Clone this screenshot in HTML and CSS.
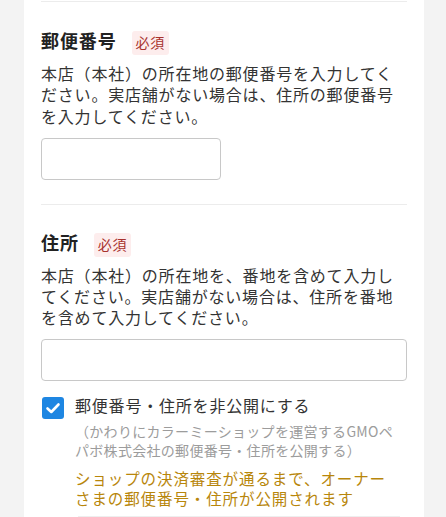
FILE: index.html
```html
<!DOCTYPE html>
<html lang="ja">
<head>
<meta charset="utf-8">
<link rel="stylesheet" href="styles.css">
</head>
<body>
<div class="card">
  <section class="field first">
    <div class="field-head">
      <h3 class="field-title">郵便番号</h3>
      <span class="badge">必須</span>
    </div>
    <p class="desc">本店（本社）の所在地の郵便番号を入力してください。実店舗がない場合は、住所の郵便番号を入力してください。</p>
    <input class="input input-short" type="text">
  </section>
  <section class="field">
    <div class="field-head">
      <h3 class="field-title">住所</h3>
      <span class="badge">必須</span>
    </div>
    <p class="desc">本店（本社）の所在地を、番地を含めて入力してください。実店舗がない場合は、住所を番地を含めて入力してください。</p>
    <input class="input input-full" type="text">
    <label class="check-row">
      <span class="checkbox">
        <svg width="22" height="22" viewBox="0 0 22 22"><path d="M5.5 11.5 L9.3 15 L16.5 7.5" fill="none" stroke="#fff" stroke-width="2.6" stroke-linecap="round" stroke-linejoin="round"/></svg>
      </span>
      <span class="check-label">郵便番号・住所を非公開にする</span>
    </label>
    <div class="check-notes">
      <p class="note">（かわりにカラーミーショップを運営するGMOペパボ株式会社の郵便番号・住所を公開する）</p>
      <p class="warn">ショップの決済審査が通るまで、オーナーさまの郵便番号・住所が公開されます</p>
      <div class="notes-rule"></div>
    </div>
  </section>
</div>
</body>
</html>
```

FILE: styles.css
```css
* { box-sizing: border-box; }
html, body {
  margin: 0;
  padding: 0;
}
body {
  background: #f3f3f3;
  font-family: "Noto Sans CJK JP", "Noto Sans", sans-serif;
  color: #333;
}
.card {
  margin-left: 24px;
  width: 400px;
  min-height: 517px;
  background: #fff;
  padding: 1px 17px 0 17px;
}
.field {
  border-top: 1px solid #ececec;
  padding: 25px 0 0 0;
}
.field.first {
  padding-top: 26px;
  padding-bottom: 24px;
}
.field-head {
  display: flex;
  align-items: flex-start;
}
.field-title {
  margin: 0;
  font-size: 18px;
  line-height: 24px;
  font-weight: 700;
  color: #222;
  letter-spacing: 0.05em;
}
.badge {
  margin-top: 3px;
  margin-left: 15px;
  background: #fdeded;
  color: #a8322d;
  font-size: 14px;
  line-height: 16px;
  padding: 3px 4px 5px 4px;
  border-radius: 3px;
  letter-spacing: 0.05em;
}
.desc {
  margin: 8px 0 0 0;
  font-size: 16px;
  line-height: 21.3px;
  letter-spacing: 0.05em;
  color: #333;
}
.input {
  display: block;
  height: 42px;
  border: 1px solid #c8c8c8;
  border-radius: 4px;
  background: #fff;
  margin-top: 11px;
  padding: 0 10px;
  font-size: 16px;
}
.input-short { width: 180px; }
.input-full { width: 366px; margin-top: 10px; }
.check-row {
  display: flex;
  align-items: flex-start;
  margin-top: 14px;
}
.checkbox {
  width: 22px;
  height: 22px;
  margin-top: 2px;
  margin-left: 1px;
  border-radius: 3px;
  background: #1e86e2;
  display: flex;
  flex: none;
}
.check-label {
  margin-left: 11px;
  font-size: 16px;
  line-height: 21px;
  letter-spacing: 0.05em;
  color: #333;
}
.check-notes {
  margin-left: 34px;
  width: 325px;
}
.note {
  margin: 3px 0 0 0;
  font-size: 14px;
  line-height: 19px;
  letter-spacing: 0.3px;
  color: #9c9c9c;
}
.warn {
  margin: 8px 0 0 0;
  font-size: 15.5px;
  line-height: 20px;
  letter-spacing: 0.9px;
  color: #b8860b;
}
.notes-rule {
  margin-top: 8px;
  margin-left: 3px;
  border-top: 1px solid #eeeeee;
}
```
